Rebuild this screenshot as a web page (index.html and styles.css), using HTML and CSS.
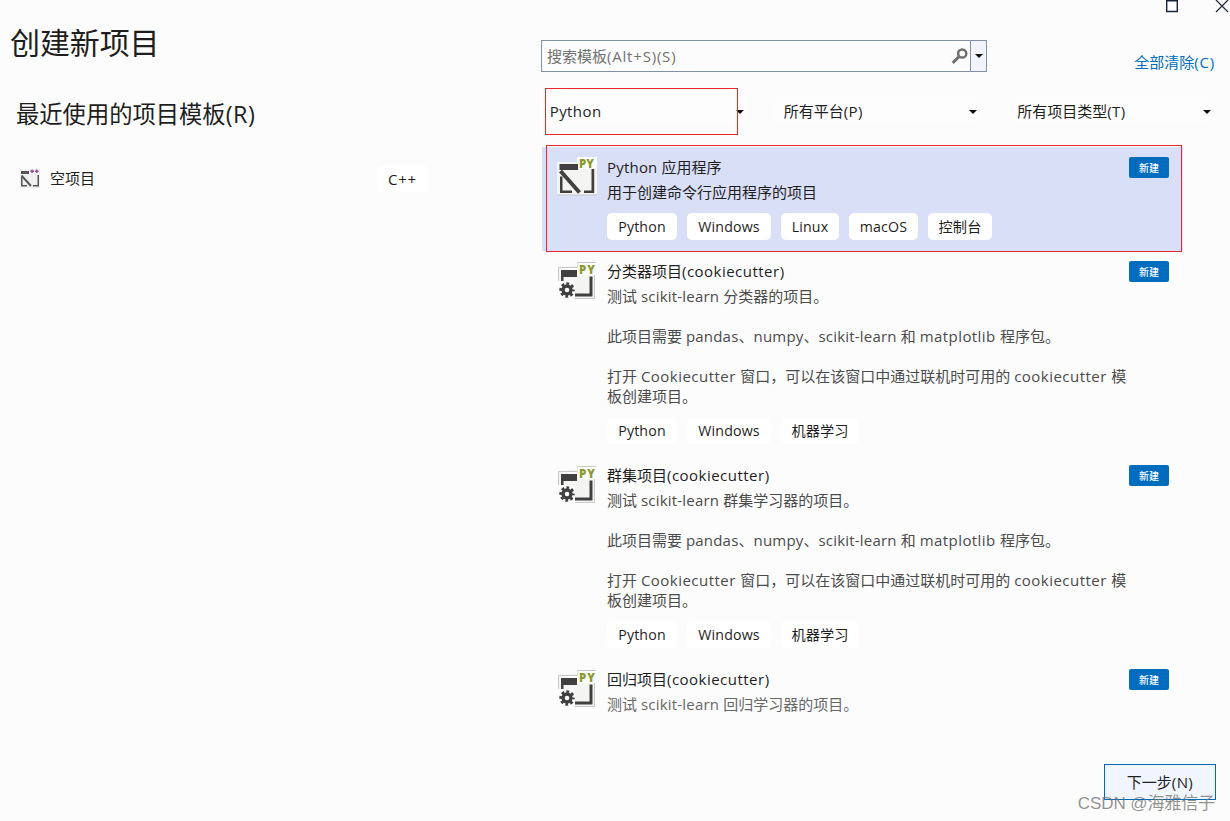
FILE: index.html
```
<!DOCTYPE html>
<html lang="zh-CN">
<head>
<meta charset="utf-8">
<title>创建新项目</title>
<link rel="stylesheet" href="styles.css">
</head>
<body>
<svg class="defs" width="0" height="0" aria-hidden="true">
  <symbol id="app" viewBox="0 0 40 40">
    <path fill="#f4f4f2" d="M0 5H20V0H40V38H0z"/>
    <path fill="#fff" d="M20 0H40V12H20z"/>
    <path fill="#c4c6cc" d="M0 37.500H40V38.500H0z"/>
    <path fill="#404040" d="M2.500 7H21V13H2.500zM3 19.500H5.500V33.500H15V36H3zM34.500 12H37.200V36H27V33.500H34.500z"/>
    <path stroke="#404040" stroke-width="4" d="M3.500 14L22.500 35.500"/>
  </symbol>
  <symbol id="cookie" viewBox="0 0 40 40">
    <path fill="#f4f4f2" stroke="#c9c9c9" d="M1.500 6.500H20.500V1.500H39M37.500 14V37.500H1.500V6.500"/>
    <path fill="#fcfcfc" d="M20.500 2H39V14H20.500zM1 20H18V39H1z"/>
    <path fill="#404040" d="M4 9H20V16H6.500V20H4zM32.500 15.500H35.500V35.500H18V32.500H32.500z"/>
    <circle cx="10" cy="29" r="4" fill="none" stroke="#404040" stroke-width="3.400"/>
    <circle cx="10" cy="29" r="6.400" fill="none" stroke="#404040" stroke-width="2.600" stroke-dasharray="2.800 2.227" stroke-dashoffset="1.400"/>
  </symbol>
</svg>

<div class="window">
  <aside class="recent">
    <h1>创建新项目</h1>
    <h2>最近使用的项目模板<span class="key">(R)</span></h2>
    <div class="recent-item">
      <svg class="recent-icon" viewBox="0 0 20 20">
        <path fill="#f0f0f0" d="M0 1H20V20H0z"/>
        <path fill="#555" d="M1 3H9V6H1zM1 9H2.500V17H7V18.500H1zM17.500 7H19V18.500H13V17H17.500z"/>
        <path stroke="#555" stroke-width="1.900" d="M1.500 7.500L11 18"/>
        <path stroke="#9b4f96" stroke-width="1.500" d="M10.300 3.200H14M12.100 1.400V5M15 3.200H18.700M16.800 1.400V5"/>
      </svg>
      <span class="recent-name">空项目</span>
      <span class="chip cpp">C++</span>
    </div>
  </aside>

  <main class="templates">
    <header class="top">
      <div class="search">
        <span class="placeholder">搜索模板<span class="sp6">(Alt+S)(S)</span></span>
        <svg class="glass" viewBox="0 0 18 18"><circle cx="11.200" cy="6.500" r="4.100" fill="none" stroke="#6f6f6f" stroke-width="2.500"/><path stroke="#6f6f6f" stroke-width="3" d="M8.200 9.500L1.700 15.800"/></svg>
        <span class="drop"><i class="arrow"></i></span>
      </div>
      <div class="right">
        <svg class="controls" viewBox="0 0 64 14"><path fill="none" stroke="#1b2440" stroke-width="1.400" d="M1.700 .7H12.300V11.500H1.700z"/><path stroke="#252b3b" stroke-width="1.300" d="M51 0L63 12M63 0L51 12"/></svg>
        <a class="clear">全部清除<span class="sp6">(C)</span></a>
      </div>
    </header>

    <div class="filters">
      <div class="combo"><span class="sp4">Python</span><i class="arrow"></i><b class="mark"></b></div>
      <div class="combo"><span>所有平台<span class="sp4">(P)</span></span><i class="arrow"></i></div>
      <div class="combo"><span>所有项目类型<span class="sp4">(T)</span></span><i class="arrow"></i></div>
    </div>

    <div class="list">
      <section class="card selected">
        <div class="icon"><svg><use href="#app"/></svg><span class="py py-app">PY</span></div>
        <div class="body">
          <h3><span class="sp2">Python </span>应用程序</h3>
          <p>用于创建命令行应用程序的项目</p>
          <div class="chips"><span class="chip w70">Python</span><span class="chip w84">Windows</span><span class="chip w58">Linux</span><span class="chip w69">macOS</span><span class="chip w64">控制台</span></div>
        </div>
        <span class="new">新建</span>
      </section>
      <section class="card">
        <div class="icon"><svg><use href="#cookie"/></svg><span class="py">PY</span></div>
        <div class="body">
          <h3>分类器项目<span class="sp5">(cookiecutter)</span></h3>
          <p>测试 <span class="sp2">scikit-learn </span>分类器的项目。<br><br>此项目需要 <span class="sp2">pandas</span>、<span class="sp2">numpy</span>、<span class="sp2">scikit-learn </span>和 <span class="sp4">matplotlib </span>程序包。<br><br>打开 <span class="sp5">Cookiecutter </span>窗口，可以在该窗口中通过联机时可用的 <span class="sp5">cookiecutter </span>模<br>板创建项目。</p>
          <div class="chips"><span class="chip w70">Python</span><span class="chip w84">Windows</span><span class="chip w78">机器学习</span></div>
        </div>
        <span class="new">新建</span>
      </section>
      <section class="card">
        <div class="icon"><svg><use href="#cookie"/></svg><span class="py">PY</span></div>
        <div class="body">
          <h3>群集项目<span class="sp5">(cookiecutter)</span></h3>
          <p>测试 <span class="sp2">scikit-learn </span>群集学习器的项目。<br><br>此项目需要 <span class="sp2">pandas</span>、<span class="sp2">numpy</span>、<span class="sp2">scikit-learn </span>和 <span class="sp4">matplotlib </span>程序包。<br><br>打开 <span class="sp5">Cookiecutter </span>窗口，可以在该窗口中通过联机时可用的 <span class="sp5">cookiecutter </span>模<br>板创建项目。</p>
          <div class="chips"><span class="chip w70">Python</span><span class="chip w84">Windows</span><span class="chip w78">机器学习</span></div>
        </div>
        <span class="new">新建</span>
      </section>
      <section class="card">
        <div class="icon"><svg><use href="#cookie"/></svg><span class="py">PY</span></div>
        <div class="body">
          <h3>回归项目<span class="sp5">(cookiecutter)</span></h3>
          <p class="fading">测试 <span class="sp2">scikit-learn </span>回归学习器的项目。</p>
        </div>
        <span class="new">新建</span>
      </section>
    </div>

    <footer class="footer">
      <button class="next">下一步<span class="sp4">(N)</span></button>
      <span class="watermark">CSDN @海雅信子</span>
    </footer>
  </main>
</div>
</body>
</html>
```

FILE: styles.css
```
* { box-sizing: border-box; }
body {
  margin: 0;
  background: #fcfcfc;
  color: #1e1e1e;
  font: 15px/20px "Open Sans", "Noto Sans CJK SC", sans-serif;
  white-space: nowrap;
}
h1, h2, h3, p { margin: 0; font-weight: 400; }
.defs { display: block; }
.window { display: flex; width: 1230px; height: 821px; overflow: hidden; }

.sp2 { letter-spacing: 0.2px; }
.sp4 { letter-spacing: 0.42px; }
.sp5 { letter-spacing: 0.48px; }
.sp6 { letter-spacing: 0.8px; }

.recent { width: 541px; padding: 23px 0 0 10px; }
h1 { font-size: 30px; line-height: 40px; letter-spacing: -0.1px; }
h2 { font-size: 23.3px; line-height: 32px; margin: 35px 0 0 6px; }
.key { letter-spacing: 0.5px; }
.recent-item { display: flex; align-items: center; width: 408px; height: 28px; margin: 34px 0 0 10px; }
.recent-icon { width: 20px; height: 20px; }
.recent-name { margin-left: 10px; flex: 1; }

.chip {
  display: flex; align-items: center; justify-content: center;
  height: 27px; width: 51px; padding-top: 1px; border-radius: 5px;
  background: #fff; font-size: 14.2px; letter-spacing: 0.15px;
}
.cpp { font-size: 15px; letter-spacing: 0.8px; }
.w58 { width: 58px; }
.w64 { width: 64px; }
.w69 { width: 69px; }
.w70 { width: 70px; }
.w78 { width: 78px; letter-spacing: 0; }
.w84 { width: 84px; }

.templates { width: 689px; display: flex; flex-direction: column; }
.top { display: flex; justify-content: space-between; height: 98px; }
.search {
  display: flex; align-items: center;
  width: 446px; height: 32px; margin-top: 40px;
  border: 1px solid #8391a7; color: #717171;
}
.placeholder { flex: 1; padding-left: 5px; }
.glass { width: 18px; height: 18px; margin-right: 1px; }
.drop {
  display: flex; align-items: center; justify-content: center;
  width: 16px; height: 30px; background: #f1f4fd; border-left: 1px solid #8391a7;
}
.arrow { width: 0; height: 0; border: 4px solid transparent; border-top-color: #111; border-bottom: 0; }
.right { display: flex; flex-direction: column; align-items: flex-end; }
.controls { width: 64px; height: 14px; margin-right: 1px; }
.clear { color: #006cbe; margin: 38px 15px 0 0; }

.filters { display: flex; gap: 28px; }
.combo {
  position: relative; display: flex; align-items: center; justify-content: space-between;
  width: 205.500px; height: 27px; padding: 0 3.500px 0 8.700px; background: #fdfdfd;
}
.combo:first-child { width: 206px; }
.combo > span { margin-top: -2px; }
.mark { position: absolute; left: 4px; top: -10px; width: 193px; height: 47px; border: 1px solid #e8262c; }

.list { height: 610px; margin: 22px 47px 0 1px; }
.card { position: relative; display: flex; padding: 10px 14px 11px 15px; }
.selected { background: #dadff8; }
.selected::after {
  content: ""; position: absolute; left: 4px; top: -2px; right: 1px; bottom: -1px;
  border: 1px solid #e8262c;
}
.icon { position: relative; width: 40px; height: 40px; }
.icon svg { display: block; width: 40px; height: 40px; }
.py {
  position: absolute; left: 22px; top: 2px;
  font: 800 11.5px/14px "Open Sans", "Noto Sans", sans-serif; letter-spacing: 1px; color: #8a9a2c;
}
.py-app { left: 22px; top: 0; letter-spacing: 0; }
.body { flex: 1; padding-left: 10px; }
h3 { font-size: 15px; line-height: 20px; }
.card p { margin-top: 5px; color: #4b4b4b; }
.selected p { color: #1e1e1e; }
.card .fading { color: #686868; }
.chips { display: flex; gap: 10px; margin-top: 11px; }
.new {
  width: 40px; height: 21px; border-radius: 2px; background: #006cbe; color: #fff;
  font-size: 10px; line-height: 22px; text-align: center; font-weight: 500;
}

.footer { position: relative; display: flex; justify-content: flex-end; padding: 7px 14px 0 0; }
.next {
  width: 112px; height: 36px; padding: 0; border: 1px solid #0068b8; background: #f1f5ff;
  color: #1e1e1e; font: inherit;
}
.watermark {
  position: absolute; right: 15px; top: 37px;
  font: 17px/20px "Liberation Sans", "Noto Sans CJK SC", sans-serif; letter-spacing: -0.1px; color: rgba(110, 110, 110, .75);
}
```
